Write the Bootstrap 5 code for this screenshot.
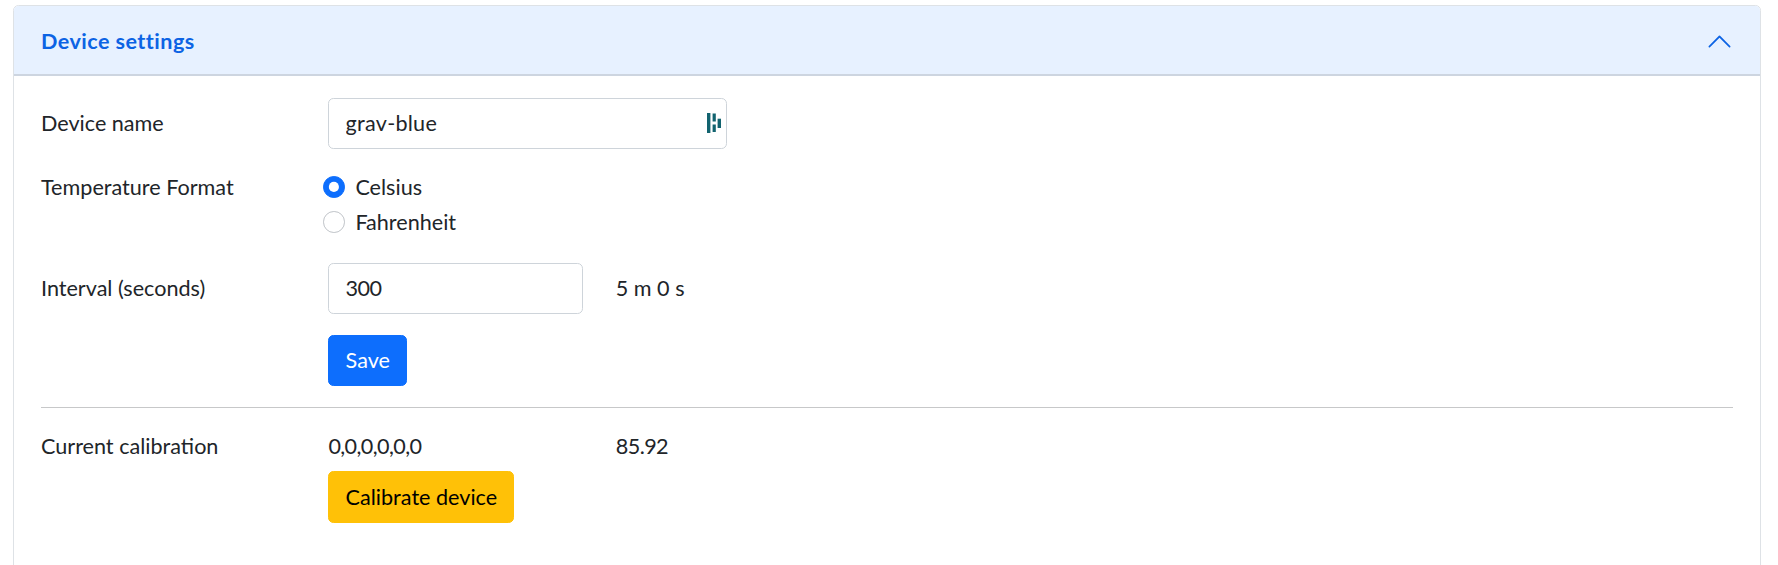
<!DOCTYPE html>
<html lang="en">
<head>
<meta charset="utf-8">
<title>Device settings</title>
<link href="https://cdn.jsdelivr.net/npm/bootstrap@5.3.0/dist/css/bootstrap.min.css" rel="stylesheet">
<style>
html { font-size: 21.6px; }
body { font-family: "Lato", "Open Sans", sans-serif; color: #212529; background: #fff; }
.page-wrap { padding: 5px 17px 0 13px; }
.accordion { --bs-accordion-btn-color: #0c63e4; --bs-accordion-active-color: #0c63e4; --bs-accordion-active-bg: #e7f1ff; --bs-accordion-border-radius: 5.4px; --bs-accordion-inner-border-radius: 4.4px; --bs-accordion-btn-icon-width: 1.25rem; --bs-accordion-btn-active-icon: url("data:image/svg+xml,%3csvg xmlns='http://www.w3.org/2000/svg' viewBox='0 0 16 16' fill='%230c63e4'%3e%3cpath fill-rule='evenodd' d='M1.646 4.646a.5.5 0 0 1 .708 0L8 10.293l5.646-5.647a.5.5 0 0 1 .708.708l-6 6a.5.5 0 0 1-.708 0l-6-6a.5.5 0 0 1 0-.708z'/%3e%3c/svg%3e"); }
.head-btn { font-size: 1rem; font-weight: 700; letter-spacing: .45px; padding-top: 22.2px; padding-bottom: 21px; }
.accordion-button:not(.collapsed) { box-shadow: inset 0 -2px 0 #cdd5e0; }
.accordion-item { min-height: 580px; }
.form-control { border-color: #ced4da; border-radius: 5.4px; padding-top: 8.5px; padding-bottom: 8.5px; }
.btn { border-radius: 5.4px; padding-top: 8.5px; padding-bottom: 8.5px; }
.form-check-input { border-color: #bfc3c8; }
.form-check-input:checked { border-color: #0d6efd; }
.name-field { position: relative; }
.name-field .form-control { letter-spacing: .25px; }
.pw-mark { position: absolute; top: 15px; right: 6px; width: 14px; height: 20px; }
.radio-shift { margin-left: -.25rem; }
.interval-row { margin-bottom: 20.6px; }
.cal-action { margin-top: 8.5px; }
.cal-action .btn { padding-top: 9px; padding-bottom: 9px; }
.num-tight { letter-spacing: -.6px; }
hr.sep { margin-top: 21.6px; }
</style>
</head>
<body>
<div class="page-wrap">
  <div class="accordion">
    <div class="accordion-item">
      <h2 class="accordion-header">
        <button class="accordion-button head-btn" type="button" aria-expanded="true">Device settings</button>
      </h2>
      <div class="accordion-collapse collapse show">
        <div class="accordion-body">
          <form>
            <div class="row mb-3 align-items-center">
              <div class="col-2"><label for="devname">Device name</label></div>
              <div class="col-3">
                <div class="name-field">
                  <input id="devname" class="form-control" type="text" value="grav-blue">
                  <svg class="pw-mark" viewBox="0 0 14 20" aria-hidden="true"><g fill="#12636f"><rect x="0" y="0" width="3.4" height="20"/><rect x="5.6" y="0.5" width="3.2" height="8"/><rect x="5.6" y="11.5" width="3.2" height="7.5"/><rect x="10.6" y="5.7" width="3.4" height="9.3"/></g></svg>
                </div>
              </div>
            </div>
            <div class="row mb-3">
              <div class="col-2">Temperature Format</div>
              <div class="col-3">
                <div class="form-check radio-shift">
                  <input class="form-check-input" type="radio" name="tf" id="tc" checked>
                  <label class="form-check-label" for="tc">Celsius</label>
                </div>
                <div class="form-check radio-shift">
                  <input class="form-check-input" type="radio" name="tf" id="tf">
                  <label class="form-check-label" for="tf">Fahrenheit</label>
                </div>
              </div>
            </div>
            <div class="row interval-row align-items-center">
              <div class="col-2"><label for="intv">Interval (seconds)</label></div>
              <div class="col-2"><input id="intv" class="form-control num-tight" type="text" value="300"></div>
              <div class="col-2">5 m 0 s</div>
            </div>
            <div class="row">
              <div class="col-2 offset-2"><button class="btn btn-primary" type="button">Save</button></div>
            </div>
          </form>
          <hr class="sep">
          <div class="row">
            <div class="col-2">Current calibration</div>
            <div class="col-2 num-tight">0,0,0,0,0,0</div>
            <div class="col-2 num-tight">85.92</div>
          </div>
          <div class="row cal-action">
            <div class="col-4 offset-2"><button class="btn btn-warning" type="button">Calibrate device</button></div>
          </div>
        </div>
      </div>
    </div>
  </div>
</div>
<script src="https://cdn.jsdelivr.net/npm/bootstrap@5.3.0/dist/js/bootstrap.bundle.min.js"></script>
</body>
</html>
